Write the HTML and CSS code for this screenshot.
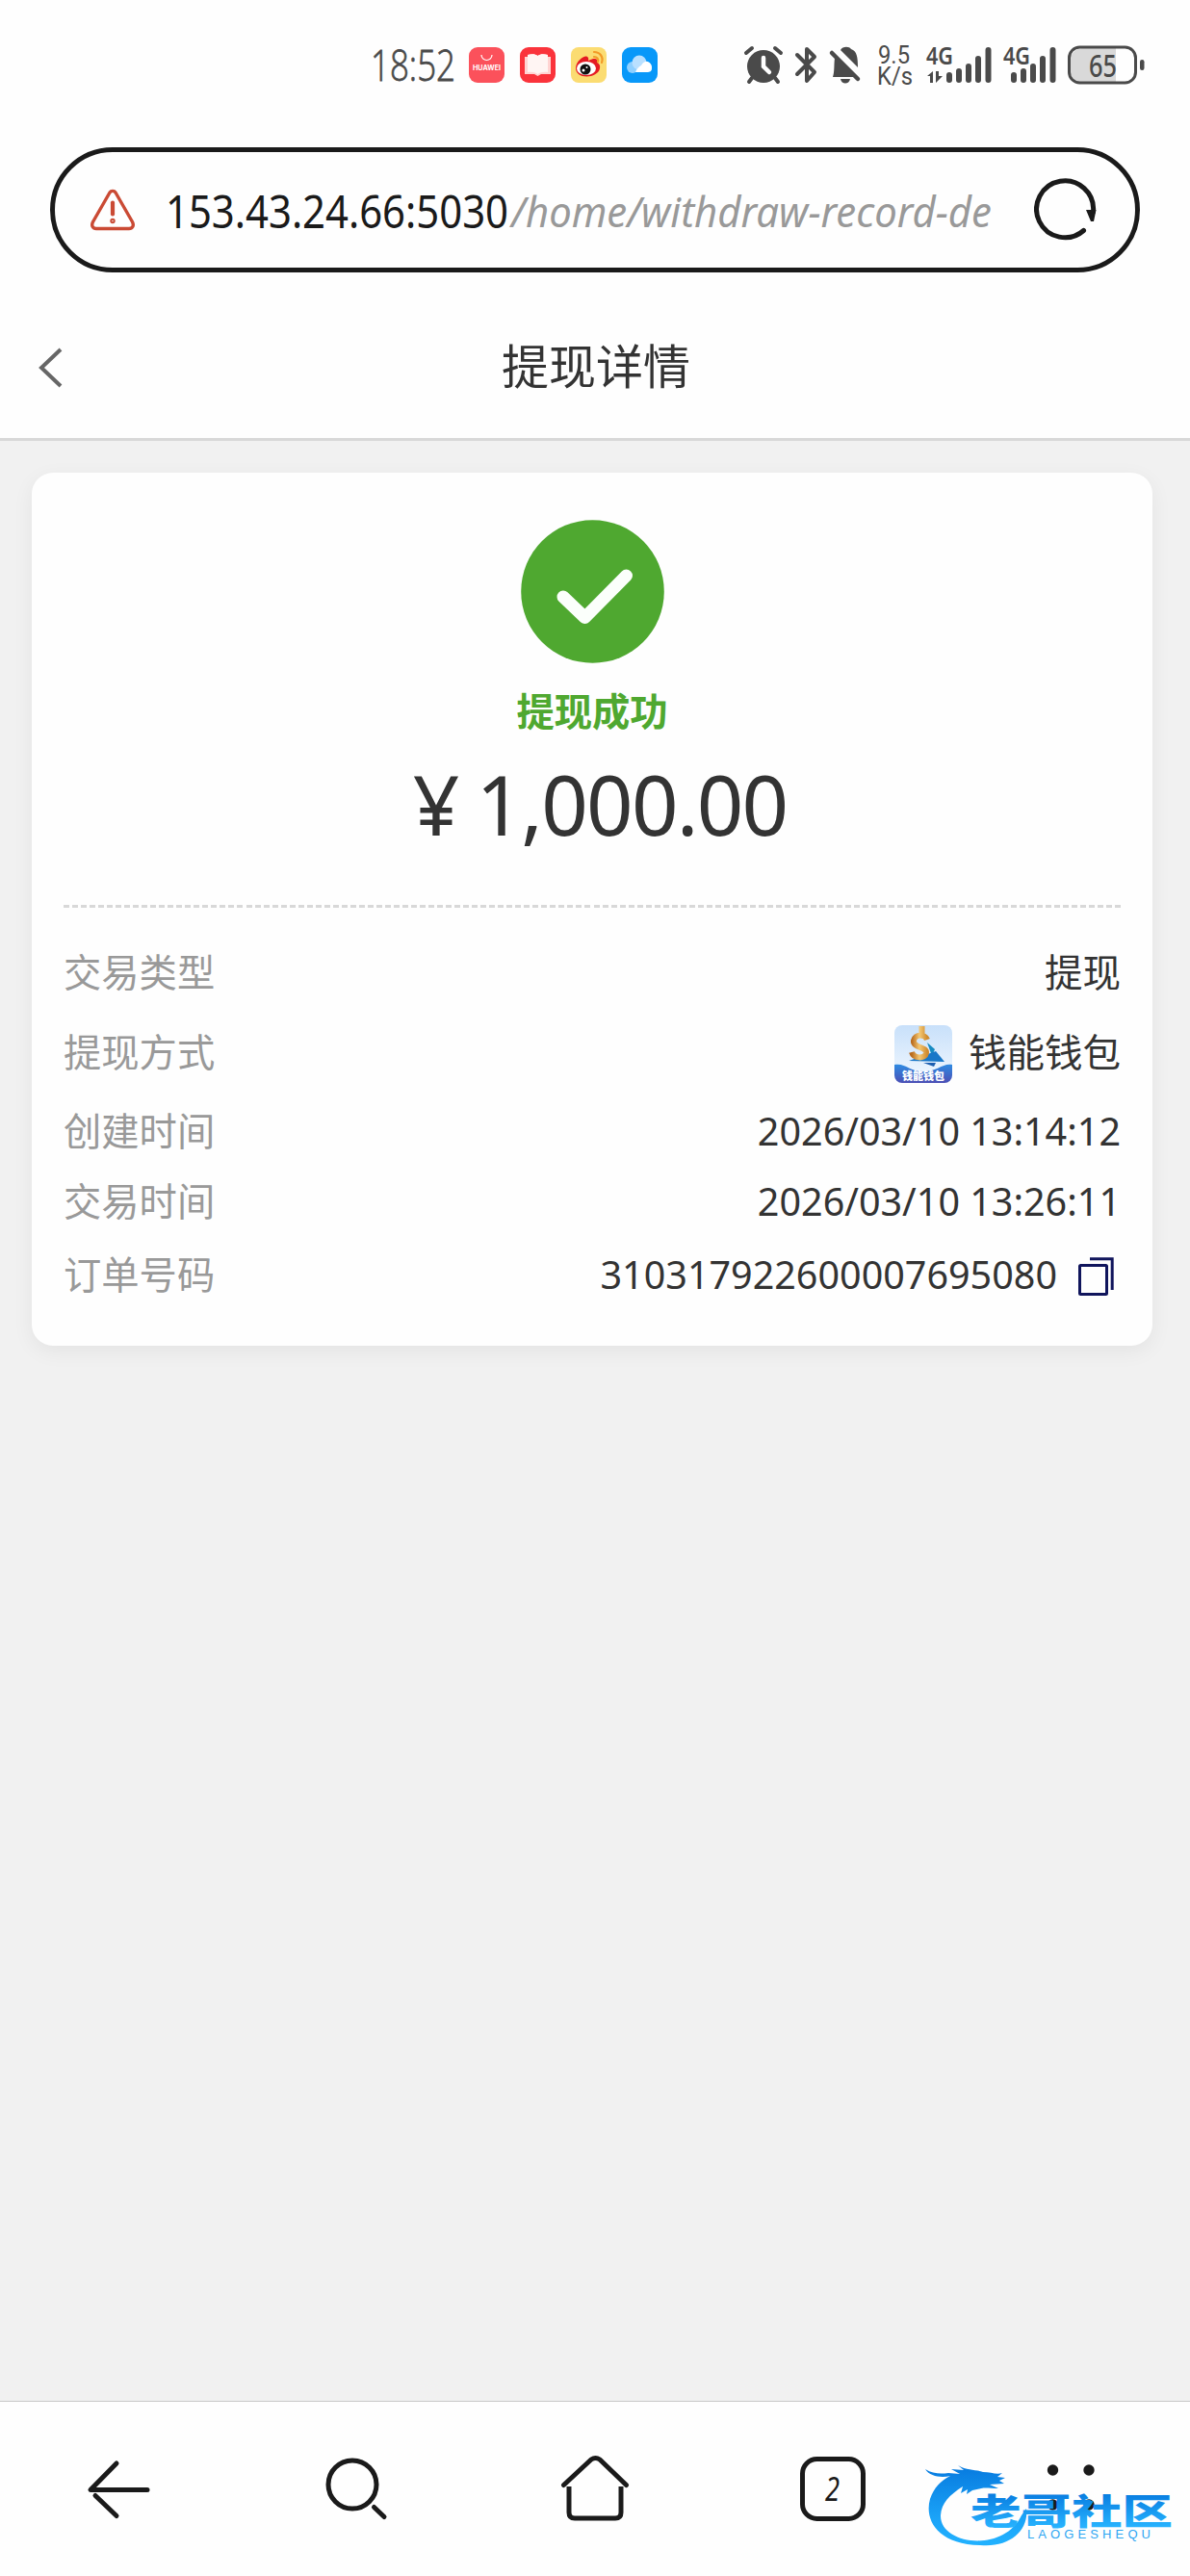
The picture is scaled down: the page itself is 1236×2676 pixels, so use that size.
FILE: index.html
```html
<!DOCTYPE html>
<html lang="zh-CN">
<head>
<meta charset="utf-8">
<title>提现详情</title>
<link rel="stylesheet" href="styles.css">
</head>
<body>
<header class="status">
  <svg class="clock" width="92" height="64" viewBox="0 0 92 64"><text x="-1" y="49" textLength="88" lengthAdjust="spacingAndGlyphs">18:52</text></svg>
  <div class="apps">
    <svg width="37" height="37" viewBox="0 0 37 37"><rect width="37" height="37" rx="9" fill="#fb515b"/><path d="M13 8a5.500 5.500 0 0 0 11 0" fill="none" stroke="#fff" stroke-width="1.200"/><text x="4" y="24" class="brand" textLength="29" lengthAdjust="spacingAndGlyphs">HUAWEI</text></svg>
    <svg width="37" height="37" viewBox="0 0 37 37"><rect width="37" height="37" rx="9" fill="#fa333b"/><path d="M5 10h3v-2c4-1 8-1 10.500 1C21 7 25 7 29 8v2h3v18H22l-3.500 2-3.500-2H5Z" fill="#ffd4d2"/><path d="M8 8c4-1 8-1 10.500 1C21 7 25 7 29 8v18c-4-.5-8 0-10.500 2-2.500-2-6.500-2.500-10.500-2Z" fill="#fff5f3"/></svg>
    <svg width="37" height="37" viewBox="0 0 37 37"><rect width="37" height="37" rx="8" fill="#fbdc72"/><path d="M5 21C6 14 14 8 17 10c2 1 1 4 1 4s7-4 9-1c1 1 0 3 0 3s4 1 3 6c-2 11-26 12-25-1Z" fill="#e51b23"/><ellipse cx="16" cy="22" rx="10" ry="7" fill="#fff"/><circle cx="15" cy="23" r="5.500" fill="#111"/><circle cx="13" cy="24" r="1.500" fill="#fff"/><circle cx="16.500" cy="21" r="1" fill="#fff"/><path d="M24 5c6 0 10 5 8 11M24 10c3 0 5 2 4 5" fill="none" stroke="#f29a27" stroke-width="2.200" stroke-linecap="round"/></svg>
    <svg width="37" height="37" viewBox="0 0 37 37"><rect width="37" height="37" rx="9" fill="#0898f9"/><circle cx="11" cy="21" r="6" fill="#8fd0ff"/><circle cx="18" cy="16" r="7.500" fill="#b9e0ff"/><path d="M14 26a13 13 0 0 1 6-7c5-9 12-2 11 3 0 3-2 4-5 4Z" fill="#fff"/></svg>
  </div>
  <svg class="signals" width="420" height="64" viewBox="770 35 420 64">
    <g fill="#4a4a4a">
      <circle cx="793" cy="69" r="17"/><path d="M775 55l6-5M811 55l-6-5M781 81l-3 4M805 81l3 4" stroke="#4a4a4a" stroke-width="4" stroke-linecap="round"/><path d="M793 60v9l6 6" fill="none" stroke="#fff" stroke-width="4.500" stroke-linecap="round"/>
      <path d="M828 57l18 18-8 9V51l8 8-18 18" fill="none" stroke="#4a4a4a" stroke-width="4" stroke-linecap="round" stroke-linejoin="round"/>
      <path d="M873 52c2-4 9-4 11-1 6 2 7 8 7 19Z"/><path d="M865 80c2-6 1-12 2-20l20 20ZM873 82h10c-1 6-9 6-10 0Z"/><path d="M864 55l27 27" fill="none" stroke="#4a4a4a" stroke-width="4.500" stroke-linecap="round"/>
      <text class="net" x="912" y="66" textLength="33" lengthAdjust="spacingAndGlyphs">9.5</text>
      <text class="net" x="911" y="88" textLength="37" lengthAdjust="spacingAndGlyphs">K/s</text>
      <text class="gen" x="962" y="67" textLength="28" lengthAdjust="spacingAndGlyphs">4G</text>
      <text class="gen" x="1042" y="67" textLength="28" lengthAdjust="spacingAndGlyphs">4G</text>
      <path d="M963 79l6-5v12h-3v-7ZM972 74v12l7-7h-4v-5Z"/>
      <path d="M986 78v5M996 74v9M1006 69v14M1016 61v22M1026.500 52v31M1053 78v5M1063 74v9M1073 69v14M1083 61v22M1093.500 52v31" stroke="#4a4a4a" stroke-width="6" stroke-linecap="round"/>
      <path d="M1159 50h-34a14 14 0 0 0-14 14v8a14 14 0 0 0 14 14h34Z" fill="#d9d9d9"/>
      <rect x="1110.500" y="49" width="69" height="37" rx="11" fill="none" stroke="#4a4a4a" stroke-width="3"/>
      <rect x="1184" y="62" width="4.500" height="11" rx="2.200"/>
      <text class="level" x="1131" y="80" textLength="29" lengthAdjust="spacingAndGlyphs">65</text>
    </g>
  </svg>
</header>

<div class="address">
  <svg width="46" height="44" viewBox="0 0 46 44" fill="none" stroke="#ca4a34" stroke-width="3.400" stroke-linecap="round" stroke-linejoin="round"><path d="M20 4a3.600 3.600 0 0 1 6 0l17.500 30.500c2 4 0 7-3.500 7H6c-3.500 0-5.500-3-3.500-7Z"/><path d="M23 14.500v12" stroke-width="4.200"/><circle cx="23" cy="33.500" r="1" /></svg>
  <svg class="url" width="860" height="80" viewBox="0 0 860 80"><text class="host" x="0" y="59" textLength="356" lengthAdjust="spacingAndGlyphs">153.43.24.66:5030</text><text class="path" x="359" y="58" textLength="499" lengthAdjust="spacingAndGlyphs">/home/withdraw-record-de</text></svg>
  <svg class="reload" width="66" height="66" viewBox="0 0 66 66"><path d="M51.500 54.500A29.500 29.500 0 1 1 61.500 35" fill="none" stroke="#1a1a1a" stroke-width="5" stroke-linecap="round"/><path d="M54 33h10.500L62 45h-3Z" fill="#1a1a1a"/></svg>
</div>

<div class="titlebar">
  <svg width="26" height="42" viewBox="0 0 26 42"><path d="M23 2L3 21l20 19" fill="none" stroke="#666" stroke-width="4"/></svg>
  <h1>提现详情</h1>
</div>

<main>
  <section class="card">
    <div class="result">
      <svg width="149" height="149" viewBox="0 0 149 149"><circle cx="74.500" cy="74.500" r="74.300" fill="#4fa830"/><path d="M44 80l22.500 21.500L109.500 58" fill="none" stroke="#fbfffb" stroke-width="13" stroke-linecap="round" stroke-linejoin="round"/></svg>
      <div class="state">提现成功</div>
      <div class="amount"><span>¥</span><span>1,000.00</span></div>
    </div>
    <div class="divider"></div>
    <dl>
      <div class="row r1"><dt>交易类型</dt><dd>提现</dd></div>
      <div class="row r2"><dt>提现方式</dt><dd>
        <svg class="wallet" width="60" height="60" viewBox="0 0 60 60">
          <defs>
            <linearGradient id="sky" x2="0" y2="1"><stop stop-color="#c8e0fa"/><stop offset="1" stop-color="#f3f9ff"/></linearGradient>
            <linearGradient id="sea" x2="0" y2="1"><stop stop-color="#2f8be2"/><stop offset="1" stop-color="#4b4fb5"/></linearGradient>
            <linearGradient id="gold"><stop stop-color="#b86a1c"/><stop offset=".5" stop-color="#f4c873"/><stop offset="1" stop-color="#d08a2e"/></linearGradient>
            <clipPath id="tile"><rect width="60" height="60" rx="8"/></clipPath>
          </defs>
          <g clip-path="url(#tile)"><rect width="60" height="60" fill="url(#sky)"/>
          <path d="M34 18l8 7-3 7Z" fill="#168bc2"/><path d="M15 37l28-10 9 11Z" fill="#1877c8"/><path d="M30 39h13l-2 4Z" fill="#1c5eb0"/>
          <path d="M34 15c-2-6-13-6-14 1-1 8 14 6 13 13-1 6-13 6-15-1M25.500 4l3 0v6M24 31v4" fill="none" stroke="url(#gold)" stroke-width="6"/>
          <path d="M0 41c12-2 15 7 30 7s20-9 30-7v19H0Z" fill="url(#sea)"/></g>
          <text x="8" y="57" textLength="44" lengthAdjust="spacingAndGlyphs">钱能钱包</text>
        </svg>
        <span>钱能钱包</span></dd></div>
      <div class="row r3"><dt>创建时间</dt><dd>2026/03/10 13:14:12</dd></div>
      <div class="row r4"><dt>交易时间</dt><dd>2026/03/10 13:26:11</dd></div>
      <div class="row r5"><dt>订单号码</dt><dd><span>310317922600007695080</span>
        <svg class="copy" width="38" height="40" viewBox="0 0 38 40" fill="none" stroke="#10155c" stroke-width="3"><rect x="1.500" y="8.500" width="28" height="30" rx="1"/><path d="M12 1.800h23.200V34"/></svg></dd></div>
    </dl>
  </section>
</main>

<nav class="tabs">
  <svg viewBox="0 0 72 72"><path d="M33 9L6 36.500h59M33 63.500L11 42.500" /></svg>
  <svg viewBox="0 0 72 72"><circle cx="31" cy="31" r="25"/><path d="M53.500 54.500l10.500 10"/></svg>
  <svg viewBox="0 0 72 72"><path d="M3.500 31.500L32 5q4.500-3 9 0l27.500 26.500"/><path d="M9 33v27q0 6 6 6h42q6 0 6-6V33" stroke-linecap="butt"/></svg>
  <svg viewBox="0 0 72 72"><rect x="4.500" y="4.500" width="63" height="62" rx="15"/><text x="28" y="48" textLength="15" lengthAdjust="spacingAndGlyphs">2</text></svg>
  <div class="more">
    <svg viewBox="0 0 72 72"><g class="dots"><circle cx="17.500" cy="16" r="5.700"/><circle cx="55" cy="16" r="5.700"/><circle cx="17.500" cy="52" r="5.700"/><circle cx="55" cy="52" r="5.700"/></g></svg>
    <svg class="watermark" viewBox="0 0 260 92">
      <defs><linearGradient id="blue" gradientUnits="userSpaceOnUse" x1="0" y1="8" x2="0" y2="90"><stop stop-color="#087ce0"/><stop offset=".65" stop-color="#1ba4f8"/><stop offset="1" stop-color="#22b2ff"/></linearGradient>
      <linearGradient id="letters" gradientUnits="userSpaceOnUse" x1="0" y1="34" x2="0" y2="70"><stop stop-color="#087ce0"/><stop offset="1" stop-color="#28b4ff"/></linearGradient></defs>
      <path fill="url(#blue)" d="M0 9c8 5 16 5 24 4l12 1-9-5 13 1-6-5c10 6 18 4 26 7 8 0 14 3 20 1l-5 4 8 1-6 3 5 3-15 1 9 4c-8 0-13-1-18 0l-9 2-6 4 1-5-7 4 2-7c-14 9-22 17-23 30-1 30 65 40 84 0l5-7c3 23-18 41-48 38C12 87-1 61 5 40c4-12 11-19 21-24C17 18 5 17 0 9Z"/>
      <text class="cn" x="47" y="67" textLength="210" lengthAdjust="spacingAndGlyphs">老哥社区</text>
      <text class="en" x="106" y="81" textLength="128">LAOGESHEQU</text>
    </svg>
  </div>
</nav>
</body>
</html>
```
FILE: styles.css
```css
* { box-sizing: border-box; }
body {
  margin: 0;
  height: 2676px;
  display: flex;
  flex-direction: column;
  background: #fefefe;
  color: #333;
  font-family: "Noto Sans", "Noto Sans CJK SC", sans-serif;
}
svg { display: block; flex: none; }
svg text { stroke: none; }

.status { height: 153px; padding: 35px 46px 0 386px; display: flex; align-items: flex-start; }
.clock text { font: 300 45px "Open Sans", sans-serif; fill: #4a4a4a; stroke: #4a4a4a; stroke-width: .8px; }
.apps { display: flex; gap: 16px; margin: 14px 0 0 9px; }
.brand { font: bold 7px Inter, sans-serif; fill: #fff; }
.signals { margin-left: auto; }
.net { font: 26px Roboto, sans-serif; }
.gen { font: 600 25px "Noto Sans", sans-serif; }
.level { font: 500 32px "Noto Sans", sans-serif; }

.address {
  height: 130px;
  margin: 0 52px;
  padding: 0 39px 0 37px;
  border: 5px solid #1a1a1a;
  border-radius: 65px;
  display: flex;
  align-items: center;
}
.url { margin-left: 32px; }
.host { font: 48px "Noto Sans", sans-serif; fill: #1a1a1a; }
.path { font: italic 43px "Noto Sans", sans-serif; fill: #999; }
.reload { margin-left: auto; }

.titlebar {
  height: 175px;
  padding: 25px 40px 0;
  border-bottom: 3px solid #d8d8d8;
  display: grid;
  grid-template-columns: 26px 1fr 26px;
  align-items: center;
}
h1 { margin: -8px 0 0 2px; text-align: center; font: 400 49px/60px "Noto Sans CJK SC", sans-serif; }

main { flex: 1; padding: 33px 39px 0 33px; background: #f1f1f1; }
.card {
  height: 907px;
  padding: 49px 33px 0;
  border-radius: 22px;
  background: #fefefe;
  box-shadow: 0 6px 22px rgba(0, 0, 0, .06);
}
.result { height: 400px; display: flex; flex-direction: column; align-items: center; }
.state { margin-top: 18px; font: 700 39.3px/60px "Noto Sans CJK SC", sans-serif; color: #4fa830; }
.amount { display: flex; gap: 19px; margin-top: 18px; font-size: 85px; line-height: 100px; letter-spacing: -1.8px; padding-left: 16px; }
.divider {
  height: 3px;
  background: repeating-linear-gradient(90deg, #d8d8d8 0 6px, transparent 6px 9.025px);
}
dl { margin: 29px 0 0; }
.row { display: flex; align-items: center; justify-content: space-between; font-size: 39.5px; line-height: 56px; }
.r1 { height: 76px; }
.r2 { height: 90px; }
.r3 { height: 74px; }
.r4 { height: 72px; }
.r5 { height: 80px; }
dt { margin-top: -4px; color: #999; font-size: 39.3px; font-family: "Noto Sans CJK SC", sans-serif; }
dd { margin: 0; display: flex; align-items: center; }
.wallet { margin: 3px 17px 0 0; }
.wallet text { font: 900 11px "Noto Sans CJK SC", sans-serif; fill: #fff; }
.copy { margin: 3px 6px 0 22px; }

.tabs {
  height: 182px;
  border-top: 1px solid #c8c8c8;
  padding-top: 55px;
  display: grid;
  grid-template-columns: repeat(5, 1fr);
  justify-items: center;
  align-items: start;
}
.tabs svg { width: 72px; height: 72px; fill: none; stroke: #1a1a1a; stroke-width: 5; stroke-linecap: round; stroke-linejoin: round; }
.tabs text { font: italic 34px "Noto Sans", sans-serif; fill: #1a1a1a; stroke: none; }
.tabs .dots { fill: #1a1a1a; stroke: none; }
.more { position: relative; }
.tabs .watermark { position: absolute; left: -115px; top: 6px; width: 260px; height: 92px; stroke: none; }
.tabs .watermark .cn { font: 900 37px "Noto Sans CJK SC", sans-serif; fill: url(#letters); }
.tabs .watermark .en { font: 13px "Liberation Sans", sans-serif; fill: #2fa6f2; }
```
